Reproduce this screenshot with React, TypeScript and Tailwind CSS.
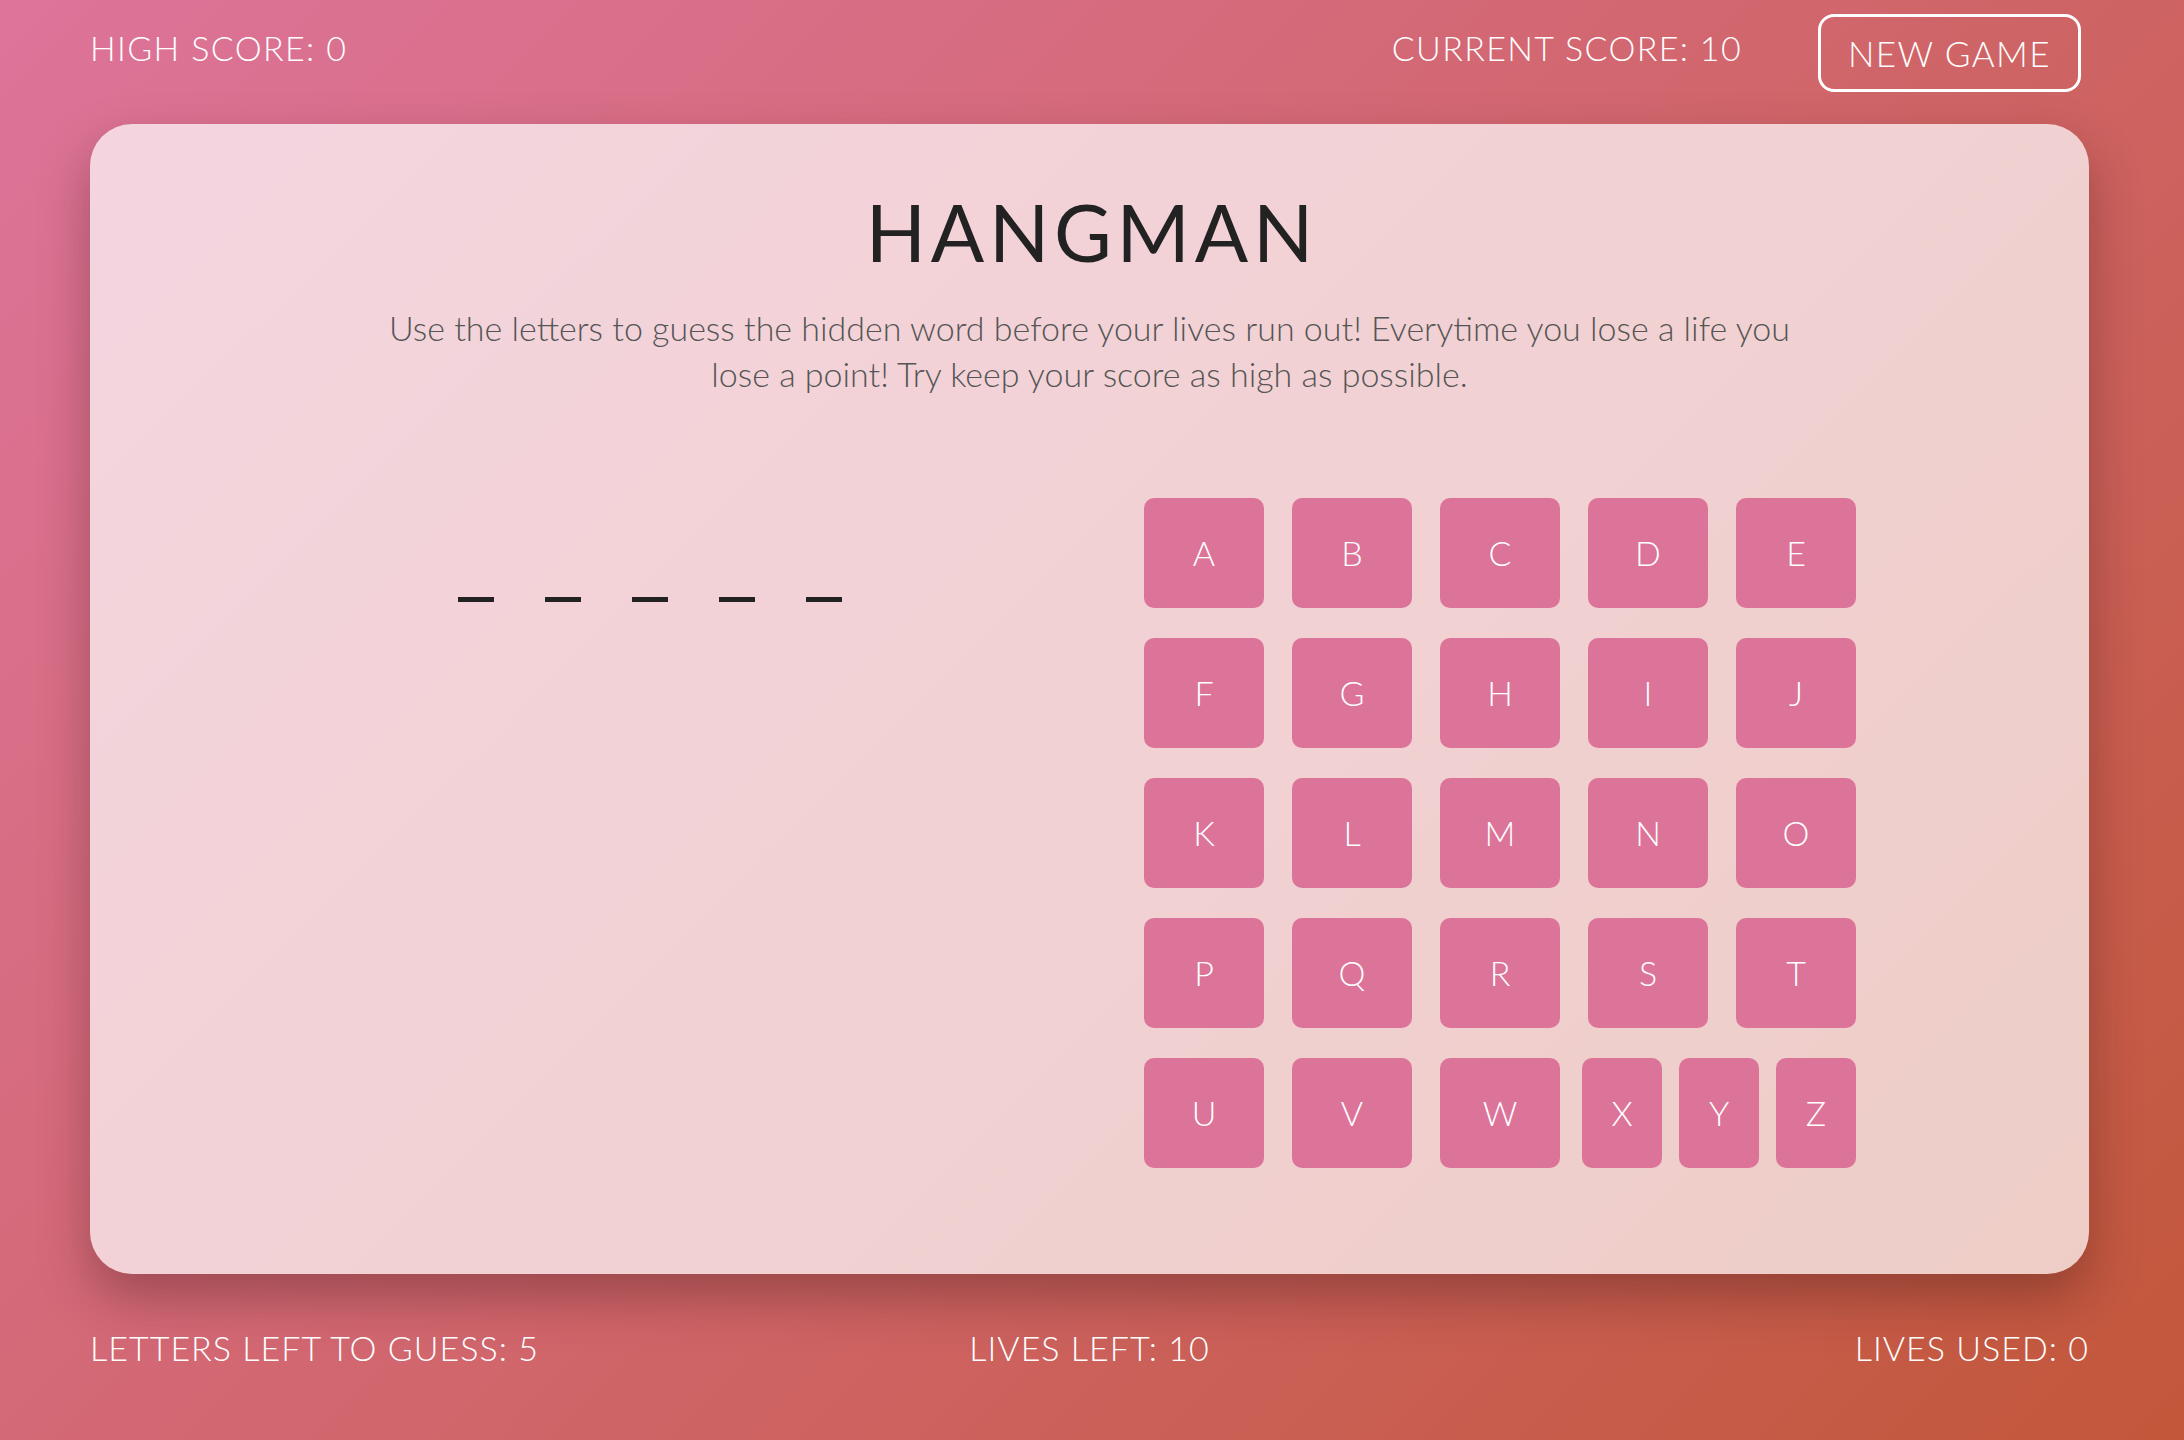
import React from "react";

const ROWS = [
  ["A", "B", "C", "D", "E"],
  ["F", "G", "H", "I", "J"],
  ["K", "L", "M", "N", "O"],
  ["P", "Q", "R", "S", "T"],
];

function LetterKey({ letter, narrow }: { letter: string; narrow?: boolean }) {
  return (
    <button
      className={`${narrow ? "w-[80px]" : "w-[120px]"} h-[110px] rounded-[10px] bg-[#dc7499] text-white text-[34px] font-light leading-none flex items-center justify-center`}
    >
      {letter}
    </button>
  );
}

export default function App() {
  const blanks = [0, 1, 2, 3, 4];

  return (
    <div className="min-h-screen w-full bg-[linear-gradient(135deg,#dd749a_0%,#d1666d_50%,#c2573a_100%)] pl-[90px] pr-[95px] [font-family:Lato,'Open_Sans',sans-serif] text-white">
      {/* Top bar */}
      <header className="flex items-start justify-between pt-[14px]">
        <div className="mt-[17px] text-[34px] font-light leading-none tracking-[0.04em]">HIGH SCORE: 0</div>
        <div className="flex items-start mr-[8px]">
          <div className="mt-[17px] text-[34px] font-light leading-none tracking-[0.04em]">CURRENT SCORE: 10</div>
          <button className="ml-[76px] w-[263px] h-[78px] rounded-[16px] border-[3px] border-white text-[35px] font-light leading-none tracking-[0.04em] flex items-center justify-center">
            NEW GAME
          </button>
        </div>
      </header>

      {/* Game card */}
      <main className="mt-[32px] rounded-[42px] bg-white/70 shadow-[0_24px_50px_rgba(60,20,20,0.35)] pt-[68px] pb-[106px] text-[#222]">
        <h1 className="text-center text-[79px] font-normal leading-none tracking-[0.06em] pl-[0.06em]">HANGMAN</h1>
        <p className="mx-auto mt-[34px] max-w-[1410px] text-center text-[34px] font-light leading-[46px] text-[#555]">
          Use the letters to guess the hidden word before your lives run out! Everytime you lose a life you lose a point! Try keep your score as high as possible.
        </p>

        <div className="mt-[101px] grid grid-cols-2 pl-[135px] pr-[164px]">
          {/* Word blanks */}
          <div className="flex justify-center pt-[99px]">
            <div className="flex gap-[51px]">
              {blanks.map((b) => (
                <div key={b} className="w-[36px] h-[5px] bg-[#222]" />
              ))}
            </div>
          </div>

          {/* Keyboard */}
          <div className="flex justify-center">
            <div className="flex flex-col gap-[30px]">
              {ROWS.map((row, i) => (
                <div key={i} className="flex gap-[28px]">
                  {row.map((l) => (
                    <LetterKey key={l} letter={l} />
                  ))}
                </div>
              ))}
              <div className="flex">
                <div className="flex gap-[28px]">
                  <LetterKey letter="U" />
                  <LetterKey letter="V" />
                  <LetterKey letter="W" />
                </div>
                <div className="ml-[22px] flex flex-1 justify-between">
                  <LetterKey letter="X" narrow />
                  <LetterKey letter="Y" narrow />
                  <LetterKey letter="Z" narrow />
                </div>
              </div>
            </div>
          </div>
        </div>
      </main>

      {/* Bottom bar */}
      <footer className="mt-[57px] pb-[40px] grid grid-cols-3 text-[34px] font-light leading-none tracking-[0.03em]">
        <div className="text-left">LETTERS LEFT TO GUESS: 5</div>
        <div className="text-center">LIVES LEFT: 10</div>
        <div className="text-right">LIVES USED: 0</div>
      </footer>
    </div>
  );
}
